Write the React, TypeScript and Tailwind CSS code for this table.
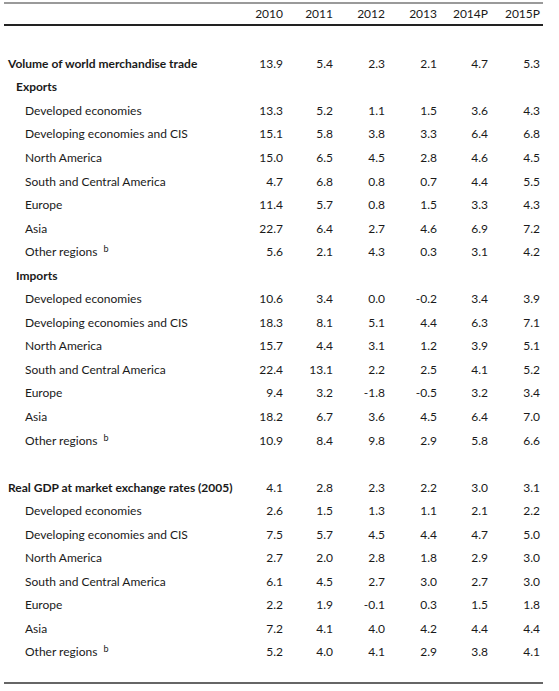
type Row = {
  label: string;
  level: 0 | 1 | 2;
  values?: string[];
  note?: string;
};

const years = ["2010", "2011", "2012", "2013", "2014P", "2015P"];

const trade: Row[] = [
  { label: "Volume of world merchandise trade", level: 0, values: ["13.9", "5.4", "2.3", "2.1", "4.7", "5.3"] },
  { label: "Exports", level: 1 },
  { label: "Developed economies", level: 2, values: ["13.3", "5.2", "1.1", "1.5", "3.6", "4.3"] },
  { label: "Developing economies and CIS", level: 2, values: ["15.1", "5.8", "3.8", "3.3", "6.4", "6.8"] },
  { label: "North America", level: 2, values: ["15.0", "6.5", "4.5", "2.8", "4.6", "4.5"] },
  { label: "South and Central America", level: 2, values: ["4.7", "6.8", "0.8", "0.7", "4.4", "5.5"] },
  { label: "Europe", level: 2, values: ["11.4", "5.7", "0.8", "1.5", "3.3", "4.3"] },
  { label: "Asia", level: 2, values: ["22.7", "6.4", "2.7", "4.6", "6.9", "7.2"] },
  { label: "Other regions", level: 2, note: "b", values: ["5.6", "2.1", "4.3", "0.3", "3.1", "4.2"] },
  { label: "Imports", level: 1 },
  { label: "Developed economies", level: 2, values: ["10.6", "3.4", "0.0", "-0.2", "3.4", "3.9"] },
  { label: "Developing economies and CIS", level: 2, values: ["18.3", "8.1", "5.1", "4.4", "6.3", "7.1"] },
  { label: "North America", level: 2, values: ["15.7", "4.4", "3.1", "1.2", "3.9", "5.1"] },
  { label: "South and Central America", level: 2, values: ["22.4", "13.1", "2.2", "2.5", "4.1", "5.2"] },
  { label: "Europe", level: 2, values: ["9.4", "3.2", "-1.8", "-0.5", "3.2", "3.4"] },
  { label: "Asia", level: 2, values: ["18.2", "6.7", "3.6", "4.5", "6.4", "7.0"] },
  { label: "Other regions", level: 2, note: "b", values: ["10.9", "8.4", "9.8", "2.9", "5.8", "6.6"] },
];

const gdp: Row[] = [
  { label: "Real GDP at market exchange rates (2005)", level: 0, values: ["4.1", "2.8", "2.3", "2.2", "3.0", "3.1"] },
  { label: "Developed economies", level: 2, values: ["2.6", "1.5", "1.3", "1.1", "2.1", "2.2"] },
  { label: "Developing economies and CIS", level: 2, values: ["7.5", "5.7", "4.5", "4.4", "4.7", "5.0"] },
  { label: "North America", level: 2, values: ["2.7", "2.0", "2.8", "1.8", "2.9", "3.0"] },
  { label: "South and Central America", level: 2, values: ["6.1", "4.5", "2.7", "3.0", "2.7", "3.0"] },
  { label: "Europe", level: 2, values: ["2.2", "1.9", "-0.1", "0.3", "1.5", "1.8"] },
  { label: "Asia", level: 2, values: ["7.2", "4.1", "4.0", "4.2", "4.4", "4.4"] },
  { label: "Other regions", level: 2, note: "b", values: ["5.2", "4.0", "4.1", "2.9", "3.8", "4.1"] },
];

const grid = "grid grid-cols-[227px_52px_50px_52px_52px_51px_52px] pr-[3px] items-center";

const indent = ["pl-[4px] font-bold", "pl-[12px] font-bold", "pl-[21px]"];

function TableRow({ row }: { row: Row }) {
  return (
    <div className={`${grid} h-[23.56px]`}>
      <div className={`${indent[row.level]} whitespace-nowrap`}>
        {row.label}
        {row.note && <sup className="ml-[6px] text-[9px] relative -top-[4px]">{row.note}</sup>}
      </div>
      {(row.values ?? ["", "", "", "", "", ""]).map((v, i) => (
        <div key={i} className="text-right">
          {v}
        </div>
      ))}
    </div>
  );
}

export default function App() {
  return (
    <div
      className="w-[559px] h-[691px] bg-white text-[#1a1a1a] text-[12px] leading-none"
      style={{ fontFamily: "Lato, 'Open Sans', sans-serif" }}
    >
      <div className="ml-[4px] w-[539px] pt-[2px]">
        <div className={`${grid} h-[24px] border-t-2 border-t-[#9a9a9a] border-b-2 border-b-[#222]`}>
          <div />
          {years.map((y) => (
            <div key={y} className="text-right">
              {y}
            </div>
          ))}
        </div>

        <div className="h-[26px]" />

        {trade.map((r, i) => (
          <TableRow key={`t${i}`} row={r} />
        ))}

        <div className="h-[23.56px]" />

        {gdp.map((r, i) => (
          <TableRow key={`g${i}`} row={r} />
        ))}

        <div className="h-[20px] border-b-2 border-b-[#666]" />
      </div>
    </div>
  );
}
